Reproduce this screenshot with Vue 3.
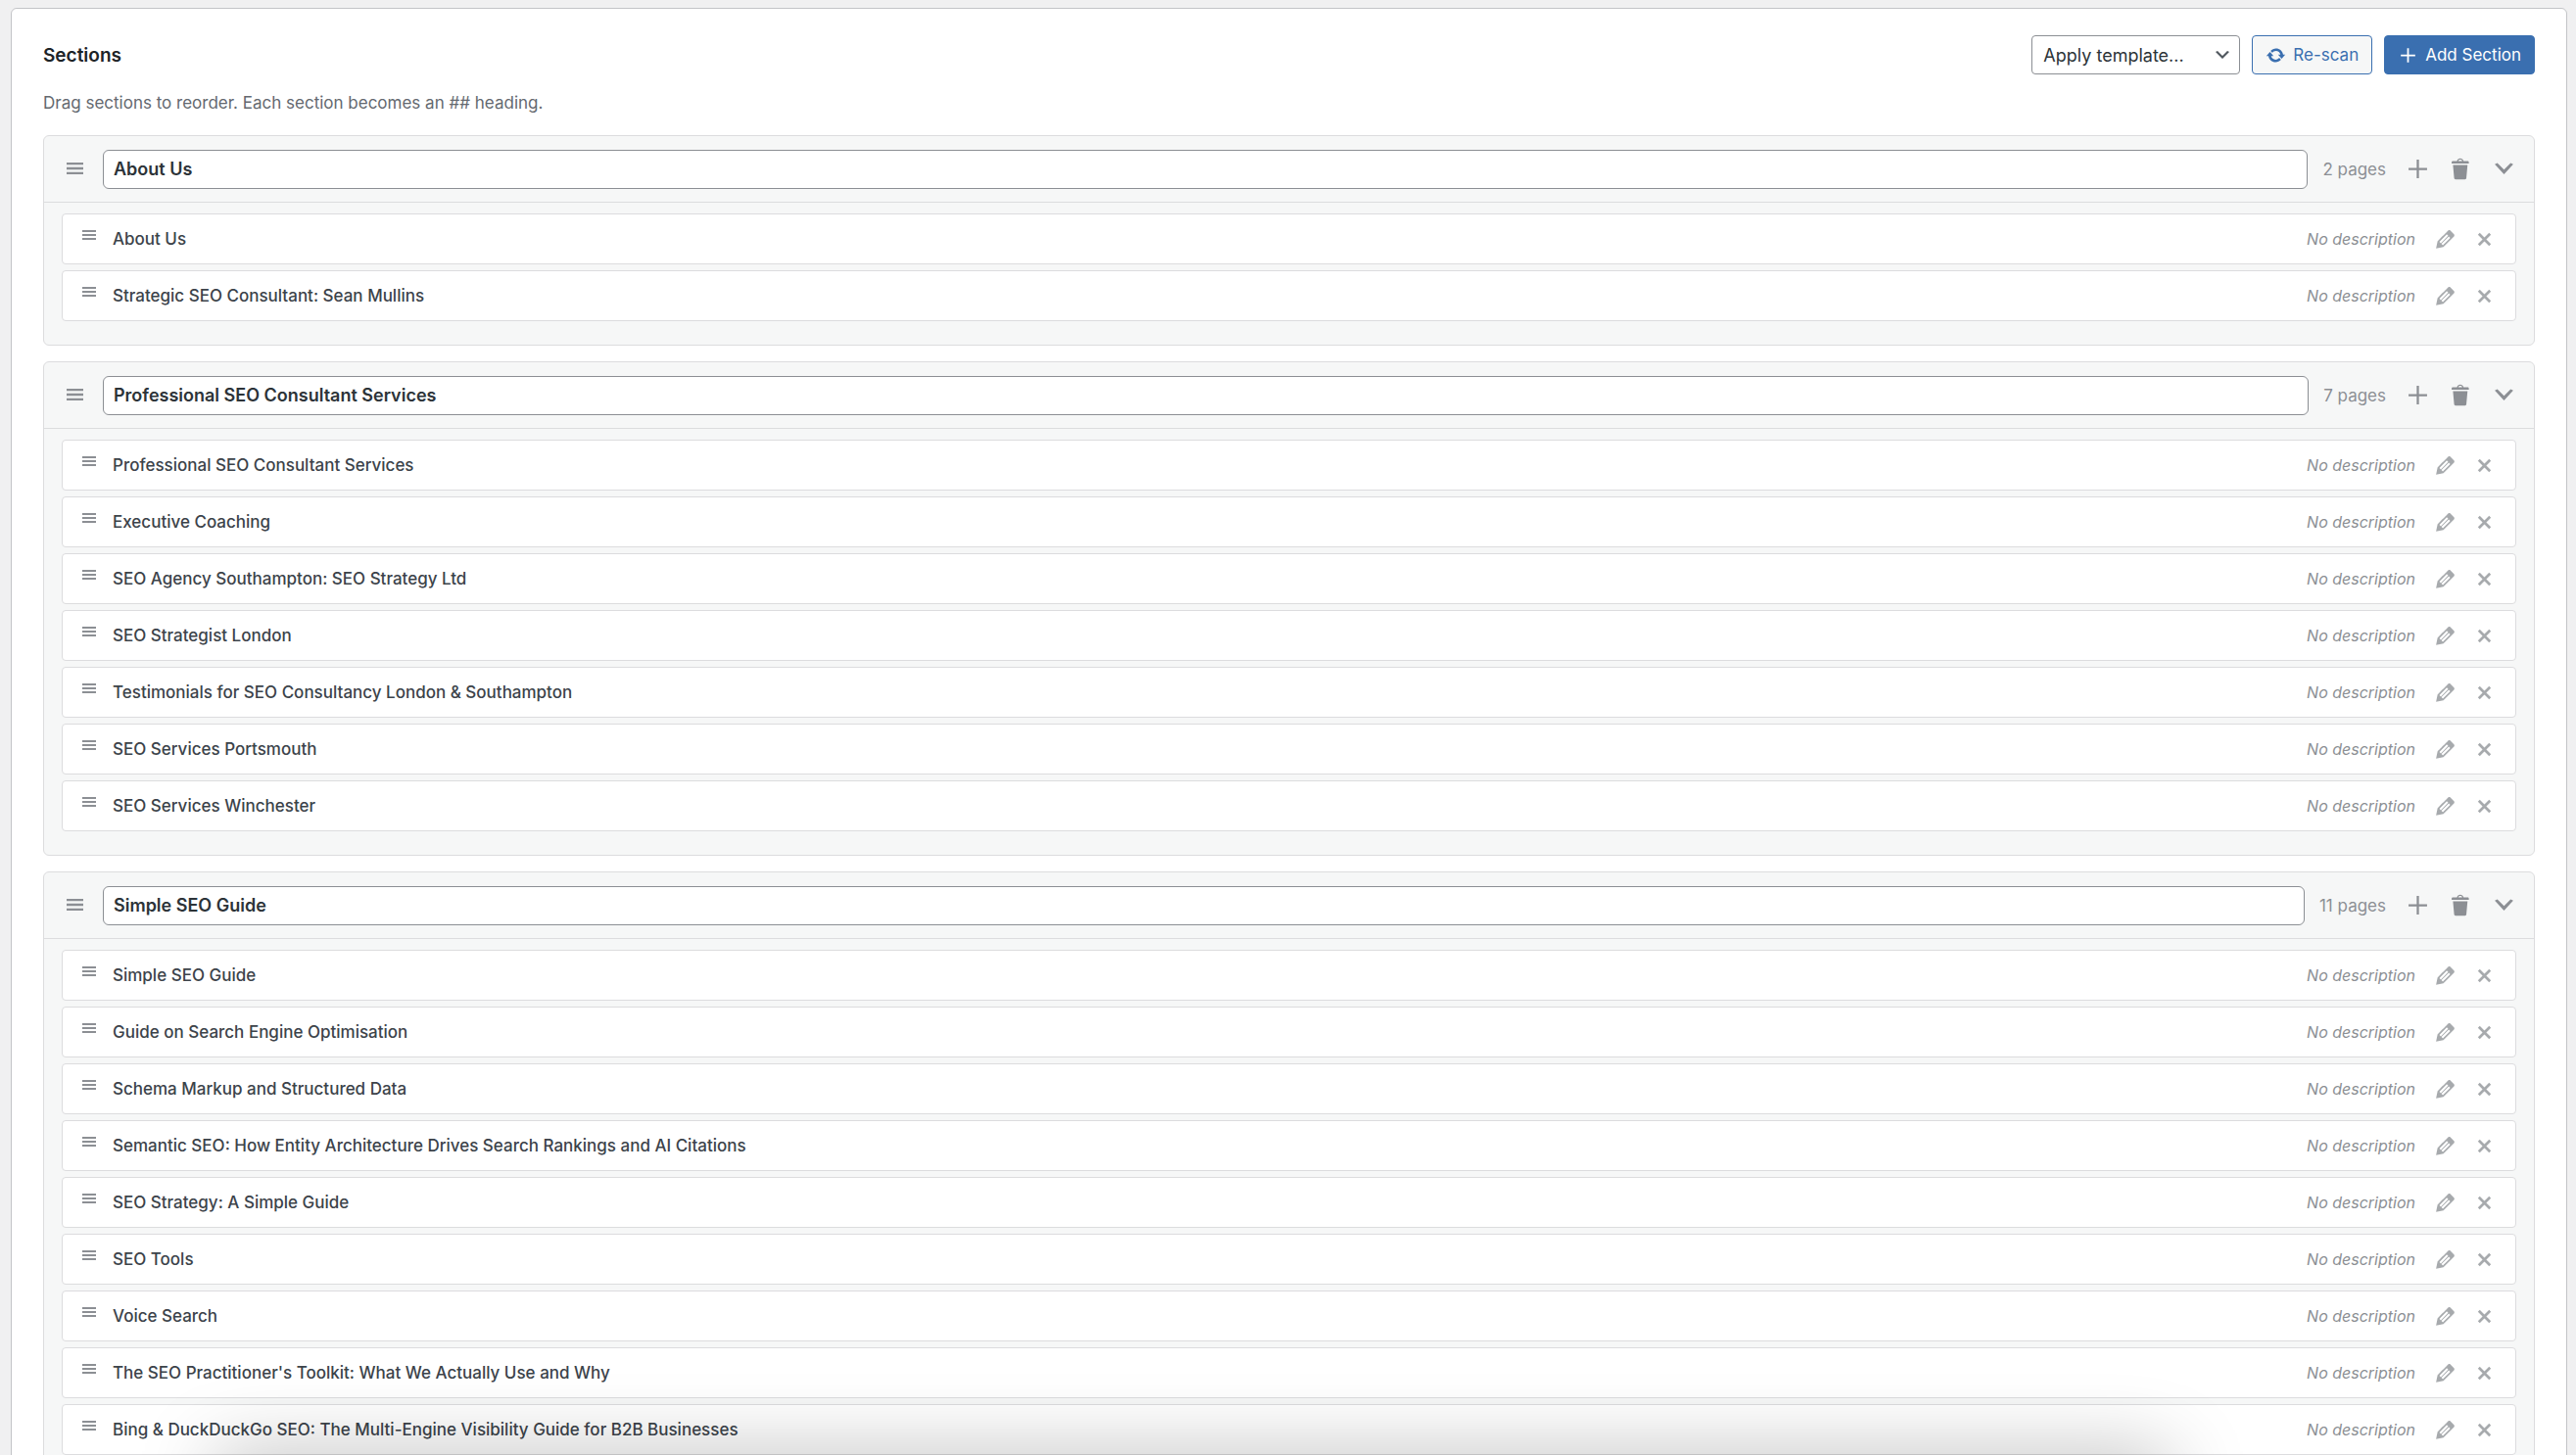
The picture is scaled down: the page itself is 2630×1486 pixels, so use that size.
<template>
  <main class="page">
    <section class="panel">
      <header class="panel-head">
        <h2>Sections</h2>
        <div class="panel-actions">
          <div class="template-picker">
            <select v-model="template" aria-label="Apply template">
              <option value="">Apply template...</option>
            </select>
            <svg class="picker-arrow" viewBox="0 0 20 20" aria-hidden="true">
              <path d="M5 6l5 5 5-5 2 1-7 7-7-7 2-1z" />
            </svg>
          </div>
          <button type="button" class="btn btn-secondary">
            <svg viewBox="0 0 20 20" aria-hidden="true"><path :d="icons.update" /></svg>
            Re-scan
          </button>
          <button type="button" class="btn btn-primary" @click="addSection">
            <svg viewBox="0 0 20 20" aria-hidden="true"><path :d="icons.plus" /></svg>
            Add Section
          </button>
        </div>
      </header>
      <p class="panel-hint">Drag sections to reorder. Each section becomes an ## heading.</p>

      <div class="section-list">
        <article v-for="section in sections" :key="section.id" class="section-card">
          <header class="section-head">
            <svg class="section-handle" viewBox="0 0 17 12" aria-hidden="true"><path :d="icons.menu" /></svg>
            <input v-model="section.title" type="text" class="section-title" aria-label="Section title" />
            <span class="section-count">{{ section.count }} pages</span>
            <div class="section-tools">
              <button type="button" class="icon-btn" aria-label="Add page">
                <svg viewBox="0 0 20 20"><path :d="icons.plus" /></svg>
              </button>
              <button type="button" class="icon-btn" aria-label="Delete section">
                <svg viewBox="0 0 20 20"><path :d="icons.trash" /></svg>
              </button>
              <button type="button" class="icon-btn" aria-label="Toggle section" @click="section.open = !section.open">
                <svg viewBox="0 0 20 20"><path :d="icons.arrow" /></svg>
              </button>
            </div>
          </header>
          <ul v-if="section.open" class="page-list">
            <li v-for="page in section.pages" :key="page" class="page-row">
              <svg class="page-handle" viewBox="0 0 17 12" aria-hidden="true"><path :d="icons.menu" /></svg>
              <span class="page-name">{{ page }}</span>
              <em class="page-desc">No description</em>
              <div class="page-tools">
                <button type="button" class="icon-btn small" aria-label="Edit description">
                  <svg viewBox="0 0 20 20"><path :d="icons.edit" /></svg>
                </button>
                <button type="button" class="icon-btn small" aria-label="Remove page">
                  <svg viewBox="0 0 20 20"><path :d="icons.close" /></svg>
                </button>
              </div>
            </li>
          </ul>
        </article>
      </div>
    </section>
    <div class="dock-shadow" aria-hidden="true"></div>
  </main>
</template>

<script setup>
import { ref } from "vue";

const template = ref("");

const icons = {
  menu: "M0 0h17v2.300H0zM0 4.850h17v2.300H0zM0 9.700h17v2.300H0z",
  plus: "M17 9.200v1.700h-6.150V17h-1.700v-6.100H3V9.200h6.150V3h1.700v6.200z",
  trash: "M12 4h3c.6 0 1 .4 1 1v1H3V5c0-.6.5-1 1-1h3c.2-1.1 1.3-2 2.500-2s2.300.9 2.500 2zM8 4h3c-.2-.6-.9-1-1.500-1S8.200 3.400 8 4zM4 7h11l-.9 10.100c0 .5-.5.9-1 .9H5.900c-.5 0-.9-.4-1-.9L4 7z",
  arrow: "M5 5.500l5 5 5-5 2 1-7 7.500-7-7.500z",
  edit: "M13.890 3.390l2.710 2.720c.46.46.42 1.240.030 1.640l-8.010 8.020-5.560 1.160 1.160-5.580s7.600-7.630 7.990-8.030c.39-.39 1.220-.39 1.680.070zm-2.730 2.790l-5.590 5.610 1.110 1.110 5.540-5.650zm-2.970 8.230l5.580-5.600-1.070-1.080-5.590 5.600z",
  close: "M14.950 6.460L11.410 10l3.540 3.540-1.410 1.410L10 11.420l-3.530 3.530-1.420-1.420L8.580 10 5.050 6.470l1.420-1.420L10 8.580l3.540-3.530z",
  update: "M10.200 3.280c3.530 0 6.430 2.610 6.920 6h2.080l-3.500 4-3.500-4h2.320c-.45-1.970-2.210-3.450-4.320-3.450-1.450 0-2.730.71-3.540 1.780L4.950 5.660C6.230 4.200 8.110 3.280 10.200 3.280zm-.4 13.440c-3.520 0-6.430-2.610-6.920-6H.8l3.500-4c1.170 1.330 2.330 2.670 3.500 4H5.480c.45 1.970 2.210 3.450 4.320 3.450 1.450 0 2.730-.71 3.540-1.780l1.710 1.950c-1.280 1.460-3.150 2.380-5.250 2.380z"
};

const sections = ref([
  {
    id: 1,
    title: "About Us",
    count: 2,
    open: true,
    pages: ["About Us", "Strategic SEO Consultant: Sean Mullins"]
  },
  {
    id: 2,
    title: "Professional SEO Consultant Services",
    count: 7,
    open: true,
    pages: [
      "Professional SEO Consultant Services",
      "Executive Coaching",
      "SEO Agency Southampton: SEO Strategy Ltd",
      "SEO Strategist London",
      "Testimonials for SEO Consultancy London & Southampton",
      "SEO Services Portsmouth",
      "SEO Services Winchester"
    ]
  },
  {
    id: 3,
    title: "Simple SEO Guide",
    count: 11,
    open: true,
    pages: [
      "Simple SEO Guide",
      "Guide on Search Engine Optimisation",
      "Schema Markup and Structured Data",
      "Semantic SEO: How Entity Architecture Drives Search Rankings and AI Citations",
      "SEO Strategy: A Simple Guide",
      "SEO Tools",
      "Voice Search",
      "The SEO Practitioner's Toolkit: What We Actually Use and Why",
      "Bing & DuckDuckGo SEO: The Multi-Engine Visibility Guide for B2B Businesses"
    ]
  }
]);

function addSection() {
  sections.value.push({ id: Date.now(), title: "", count: 0, open: true, pages: [] });
}
</script>

<style>
body {
  background: #f0f0f1;
}
</style>

<style scoped>
.page {
  height: 100vh;
  padding: 8px 9px 0 11px;
  overflow: hidden;
  box-sizing: border-box;
  font-family: Inter, "Liberation Sans", sans-serif;
  font-size: 17px;
  color: #3c434a;
}

.page button,
.page select,
.page input {
  font-family: inherit;
}

.panel {
  padding: 27px 32px;
  border: 1px solid #c3c4c7;
  border-radius: 6px;
  background: #fff;
}

.panel-head {
  display: flex;
  align-items: center;
  justify-content: space-between;
  height: 40px;
}

.panel-head h2 {
  margin: 0;
  font-size: 19px;
  font-weight: 600;
  color: #1d2327;
}

.panel-actions {
  display: flex;
  gap: 12px;
}

.template-picker {
  position: relative;
}

.template-picker select {
  width: 213px;
  height: 40px;
  padding: 0 36px 0 11px;
  border: 1px solid #8c8f94;
  border-radius: 4px;
  appearance: none;
  background: #fff;
  font-size: 18px;
  color: #2c3338;
}

.picker-arrow {
  position: absolute;
  top: 10px;
  right: 8px;
  width: 20px;
  height: 20px;
  fill: #50575e;
  pointer-events: none;
}

.btn {
  display: flex;
  align-items: center;
  gap: 7px;
  height: 40px;
  padding: 0 13px;
  border: 1px solid #3a6fb0;
  border-radius: 4px;
  font-size: 17px;
}

.btn svg {
  width: 21px;
  height: 21px;
  fill: currentColor;
}

.btn-secondary {
  background: #f6f7f7;
  color: #3a6fb0;
}

.btn-primary {
  background: #3a6fb0;
  color: #fff;
}

.panel-hint {
  margin: 16px 0 20px;
  font-size: 17px;
  line-height: 26px;
  color: #646970;
}

.section-list {
  display: grid;
  gap: 16px;
}

.section-card {
  border: 1px solid #dcdcde;
  border-radius: 6px;
  background: #f6f7f7;
}

.section-head {
  display: flex;
  align-items: center;
  height: 67px;
  padding: 0 17px 0 23px;
  border-bottom: 1px solid #dcdcde;
}

.section-handle {
  flex: none;
  width: 17px;
  height: 12px;
  margin: 0 20px 2px 0;
  fill: #8c8f94;
}

.section-title {
  flex: 1;
  min-width: 0;
  height: 40px;
  padding: 0 10px;
  border: 1px solid #8c8f94;
  border-radius: 6px;
  box-sizing: border-box;
  background: #fff;
  font-size: 18px;
  font-weight: 600;
  color: #2c3338;
}

.section-count {
  margin: 0 19px 0 15px;
  font-size: 17px;
  color: #8c8f94;
}

.section-tools {
  display: flex;
  gap: 17px;
}

.page-list {
  display: grid;
  gap: 6px;
  margin: 0;
  padding: 11px 18px 24px;
  list-style: none;
}

.page-row {
  display: flex;
  align-items: center;
  height: 52px;
  padding: 0 18px 0 20px;
  border: 1px solid #dcdcde;
  border-radius: 4px;
  box-sizing: border-box;
  background: #fff;
}

.page-handle {
  flex: none;
  width: 14px;
  height: 10px;
  margin: 0 17px 8px 0;
  fill: #8c8f94;
}

.page-name {
  flex: 1;
  font-size: 17px;
  font-weight: 500;
}

.page-desc {
  margin-right: 17px;
  font-size: 16px;
  color: #8c8f94;
}

.page-tools {
  display: flex;
  gap: 13px;
}

.icon-btn {
  display: block;
  padding: 0;
  border: 0;
  background: none;
  color: #8c8f94;
}

.icon-btn svg {
  display: block;
  width: 27px;
  height: 27px;
  fill: currentColor;
}

.icon-btn.small {
  color: #a7aaad;
}

.dock-shadow {
  position: fixed;
  top: 100%;
  left: 220px;
  right: 415px;
  height: 60px;
  box-shadow: 0 0 80px rgba(0, 0, 0, 0.28);
  pointer-events: none;
}
</style>
